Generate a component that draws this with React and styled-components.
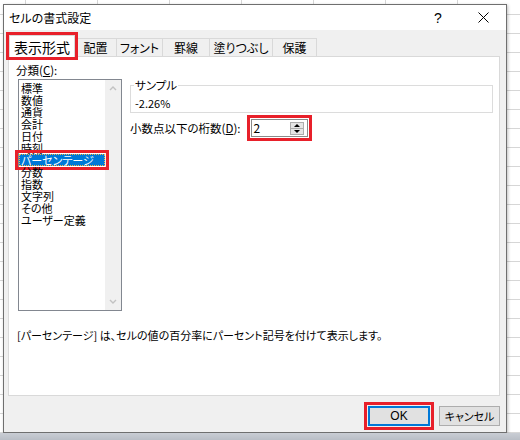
import React from 'react';
import styled, { createGlobalStyle } from 'styled-components';

const GlobalStyle = createGlobalStyle`
  html, body {
    margin: 0;
    padding: 0;
  }
  body {
    font-family: "Noto Sans CJK JP", "Noto Sans", sans-serif;
    font-feature-settings: "palt";
    color: #000;
  }
`;

const RED = '#e8202a';

const Page = styled.div`
  width: 520px;
  height: 440px;
  overflow: hidden;
  display: flex;
  flex-direction: column;
  background-color: #fff;
  background-image: linear-gradient(#d6d6d6 1px, transparent 1px),
    linear-gradient(90deg, #d6d6d6 1px, transparent 1px);
  background-size: 72px 19px;
  background-position: 25px 14px;
`;

const Dialog = styled.div`
  box-sizing: border-box;
  margin: 4px 0 0 3px;
  width: 504px;
  height: 429px;
  display: flex;
  flex-direction: column;
  background: #f0f0f0;
  border: 1px solid #6f6f6f;
  box-shadow: 1px 1px 3px rgba(0, 0, 0, 0.25);
`;

const SheetStrip = styled.div`
  flex: 1;
  background: linear-gradient(#c9cdd4, #b9bec6);
`;

const TitleBar = styled.div`
  height: 25px;
  display: flex;
  align-items: center;
  background: #fff;
`;

const Title = styled.div`
  flex: 1;
  padding-left: 5px;
  font-size: 12px;
  line-height: 25px;
`;

const TitleButton = styled.div`
  width: ${(p) => p.$w}px;
  height: 25px;
  display: flex;
  align-items: center;
  justify-content: center;
  font-family: "Liberation Sans", sans-serif;
  font-size: 14px;
`;

const Body = styled.div`
  flex: 1;
  display: flex;
  flex-direction: column;
  padding: 5px 6px 6px 4px;
`;

const TabRow = styled.div`
  display: flex;
  align-items: flex-end;
  padding-left: 2px;
  position: relative;
  z-index: 1;
`;

const Tab = styled.div`
  box-sizing: border-box;
  width: ${(p) => p.$w}px;
  height: ${(p) => (p.$active ? 22 : 18)}px;
  margin-bottom: ${(p) => (p.$active ? -1 : 0)}px;
  margin-left: -1px;
  display: flex;
  align-items: center;
  justify-content: center;
  font-size: ${(p) => (p.$active ? 14 : 12)}px;
  background: ${(p) => (p.$active ? '#fff' : '#f0f0f0')};
  border: 1px solid #d9d9d9;
  border-bottom: none;
  outline: ${(p) => (p.$active ? `3px solid ${RED}` : 'none')};
  z-index: ${(p) => (p.$active ? 1 : 0)};
`;

const Panel = styled.div`
  box-sizing: border-box;
  height: 340px;
  background: #fff;
  border: 1px solid #d9d9d9;
  padding: 7px 6px 0 7px;
  display: flex;
  flex-direction: column;
`;

const TopRow = styled.div`
  display: flex;
  gap: 8px;
`;

const LeftCol = styled.div`
  display: flex;
  flex-direction: column;
`;

const Label = styled.div`
  font-size: 11.5px;
  line-height: ${(p) => p.$lh || 12}px;
  white-space: nowrap;
  u {
    text-decoration: underline;
  }
`;

const ListBox = styled.div`
  box-sizing: border-box;
  margin: 3px 0 0 2px;
  width: 104px;
  height: 232px;
  border: 1px solid #828790;
  display: flex;
`;

const Items = styled.div`
  flex: 1;
  padding-top: 2px;
`;

const Item = styled.div`
  box-sizing: border-box;
  height: 12px;
  font-size: 11px;
  line-height: ${(p) => (p.$selected ? 10 : 12)}px;
  padding-left: ${(p) => (p.$selected ? 1 : 2)}px;
  white-space: nowrap;
  color: ${(p) => (p.$selected ? '#fff' : '#000')};
  background: ${(p) => (p.$selected ? '#0078d7' : 'transparent')};
  border: ${(p) => (p.$selected ? '1px dotted #f3b54a' : 'none')};
  outline: ${(p) => (p.$selected ? `3px solid ${RED}` : 'none')};
  outline-offset: 1px;
  position: relative;
`;

const ScrollBar = styled.div`
  width: 16px;
  background: #f0f0f0;
  display: flex;
  flex-direction: column;
  justify-content: space-between;
  align-items: center;
  padding: 6px 0;
`;

const RightCol = styled.div`
  flex: 1;
  display: flex;
  flex-direction: column;
`;

const Group = styled.fieldset`
  margin: 15px 0 0 0;
  padding: 6px 4px 3px 4px;
  border: 1px solid #dcdcdc;
  min-width: 0;
`;

const Legend = styled.legend`
  padding: 0 1px;
  margin-left: -1px;
  font-size: 11.5px;
  line-height: 12px;
`;

const SampleValue = styled.div`
  font-size: 11px;
  line-height: 12px;
`;

const DecimalRow = styled.div`
  margin-top: 6px;
  display: flex;
  align-items: center;
  gap: 10px;
`;

const SpinBox = styled.div`
  box-sizing: border-box;
  width: 57px;
  height: 18px;
  border: 1px solid #8a8a8a;
  display: flex;
  align-items: center;
  padding: 0 3px 0 2px;
  outline: 3px solid ${RED};
  outline-offset: 1px;
`;

const SpinValue = styled.div`
  flex: 1;
  font-size: 12px;
  line-height: 16px;
`;

const Spinner = styled.div`
  display: flex;
  flex-direction: column;
  width: 14px;
  height: 13px;
`;

const SpinHalf = styled.div`
  box-sizing: border-box;
  flex: 1;
  background: #e5e5e5;
  border: 1px solid #adadad;
  margin-top: ${(p) => (p.$down ? -1 : 0)}px;
  display: flex;
  align-items: center;
  justify-content: center;
`;

const Description = styled.div`
  margin: 18px 0 0 1px;
  font-size: 11px;
  line-height: 12px;
  white-space: nowrap;
`;

const ButtonRow = styled.div`
  margin-top: 10px;
  display: flex;
  justify-content: flex-end;
  gap: 9px;
`;

const Button = styled.div`
  box-sizing: border-box;
  width: ${(p) => p.$w}px;
  height: 20px;
  display: flex;
  align-items: center;
  justify-content: center;
  font-size: 11px;
  background: #e1e1e1;
  border: ${(p) => (p.$default ? '2px solid #0078d7' : '1px solid #adadad')};
  outline: ${(p) => (p.$default ? `3px solid ${RED}` : 'none')};
  outline-offset: 1px;
`;

const OkText = styled.span`
  font-family: "Liberation Sans", sans-serif;
  font-size: 12px;
  font-weight: normal;
`;

function Chevron({ up }) {
  return (
    <svg width="8" height="5" viewBox="0 0 8 5">
      <polyline
        points={up ? '1,4 4,1 7,4' : '1,1 4,4 7,1'}
        fill="none"
        stroke="#c2c2c2"
        strokeWidth="1.4"
      />
    </svg>
  );
}

function Triangle({ up }) {
  return (
    <svg width="6" height="3" viewBox="0 0 6 3">
      <polygon points={up ? '0,3 3,0 6,3' : '0,0 6,0 3,3'} fill="#000" />
    </svg>
  );
}

const tabs = [
  { name: '表示形式', w: 66, active: true },
  { name: '配置', w: 43 },
  { name: 'フォント', w: 47 },
  { name: '罫線', w: 48 },
  { name: '塗りつぶし', w: 64 },
  { name: '保護', w: 45 },
];

const categories = [
  '標準',
  '数値',
  '通貨',
  '会計',
  '日付',
  '時刻',
  'パーセンテージ',
  '分数',
  '指数',
  '文字列',
  'その他',
  'ユーザー定義',
];

export default function App() {
  return (
    <Page>
      <GlobalStyle />
      <Dialog>
        <TitleBar>
          <Title>セルの書式設定</Title>
          <TitleButton $w={46}>?</TitleButton>
          <TitleButton $w={45}>
            <svg width="11" height="11" viewBox="0 0 11 11">
              <path d="M0.5 0.5 L10.5 10.5 M10.5 0.5 L0.5 10.5" stroke="#000" strokeWidth="1" />
            </svg>
          </TitleButton>
        </TitleBar>
        <Body>
          <TabRow>
            {tabs.map((t) => (
              <Tab key={t.name} $w={t.w} $active={t.active}>
                {t.name}
              </Tab>
            ))}
          </TabRow>
          <Panel>
            <TopRow>
              <LeftCol>
                <Label>
                  分類(<u>C</u>):
                </Label>
                <ListBox>
                  <Items>
                    {categories.map((c) => (
                      <Item key={c} $selected={c === 'パーセンテージ'}>
                        {c}
                      </Item>
                    ))}
                  </Items>
                  <ScrollBar>
                    <Chevron up />
                    <Chevron />
                  </ScrollBar>
                </ListBox>
              </LeftCol>
              <RightCol>
                <Group>
                  <Legend>サンプル</Legend>
                  <SampleValue>-2.26%</SampleValue>
                </Group>
                <DecimalRow>
                  <Label $lh={18}>
                    小数点以下の桁数(<u>D</u>):
                  </Label>
                  <SpinBox>
                    <SpinValue>2</SpinValue>
                    <Spinner>
                      <SpinHalf>
                        <Triangle up />
                      </SpinHalf>
                      <SpinHalf $down>
                        <Triangle />
                      </SpinHalf>
                    </Spinner>
                  </SpinBox>
                </DecimalRow>
              </RightCol>
            </TopRow>
            <Description>
              [パーセンテージ] は、セルの値の百分率にパーセント記号を付けて表示します。
            </Description>
          </Panel>
          <ButtonRow>
            <Button $w={62} $default>
              <OkText>OK</OkText>
            </Button>
            <Button $w={61}>キャンセル</Button>
          </ButtonRow>
        </Body>
      </Dialog>
      <SheetStrip />
    </Page>
  );
}
